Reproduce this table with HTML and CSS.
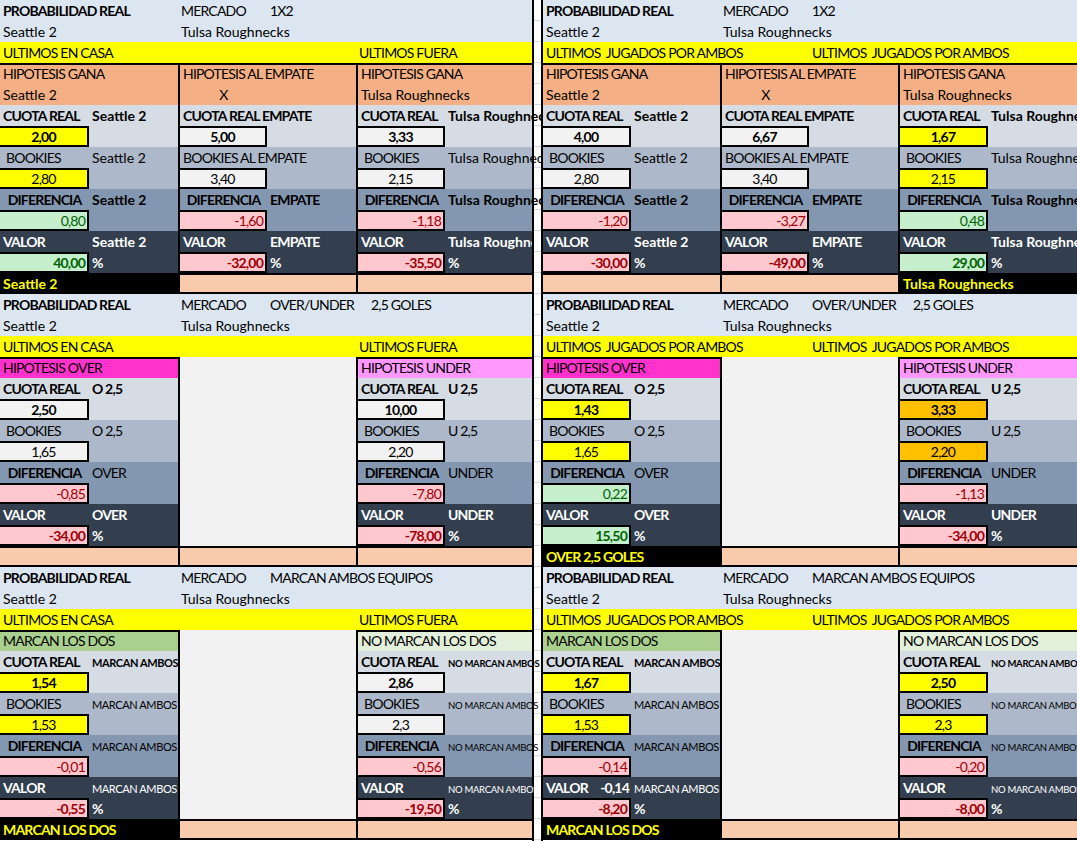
FILE: index.html
```html
<!DOCTYPE html>
<html lang="es">
<head>
<meta charset="utf-8">
<title>Probabilidad real</title>
<link rel="stylesheet" href="styles.css">
</head>
<body>
<div class="sheet">

<!-- ================= LEFT PANEL ================= -->
<div class="panel pl">

<section class="sec">
  <div class="hrow blue"><div class="c s2 b">PROBABILIDAD REAL</div><div class="c">MERCADO</div><div class="c s3">1X2</div></div>
  <div class="hrow blue"><div class="c s2 n">Seattle 2</div><div class="c s4 n">Tulsa Roughnecks</div></div>
  <div class="hrow yel"><div class="c s4">ULTIMOS EN CASA</div><div class="c s2">ULTIMOS FUERA</div></div>
  <div class="groups">
    <div class="grp">
      <div class="c s2 hy t">HIPOTESIS GANA</div>
      <div class="c s2 hy n">Seattle 2</div>
      <div class="c cu b">CUOTA REAL</div><div class="c cu b n">Seattle 2</div>
      <div class="box yl b ctr">2,00</div><div class="c cu"></div>
      <div class="c bk ind">BOOKIES</div><div class="c bk n">Seattle 2</div>
      <div class="box yl ctr">2,80</div><div class="c bk"></div>
      <div class="c df b ctr">DIFERENCIA</div><div class="c df b n">Seattle 2</div>
      <div class="box gr rt">0,80</div><div class="c df"></div>
      <div class="c va b">VALOR</div><div class="c va b n">Seattle 2</div>
      <div class="box gr rt b">40,00</div><div class="c va b">%</div>
      <div class="res s2 win n">Seattle 2</div>
    </div>
    <div class="grp">
      <div class="c s2 hy t">HIPOTESIS AL EMPATE</div>
      <div class="c hy ctr">X</div><div class="c hy"></div>
      <div class="c s2 cu b">CUOTA REAL EMPATE</div>
      <div class="box wh b ctr">5,00</div><div class="c cu"></div>
      <div class="c s2 bk">BOOKIES AL EMPATE</div>
      <div class="box wh ctr">3,40</div><div class="c bk"></div>
      <div class="c df b ctr">DIFERENCIA</div><div class="c df b">EMPATE</div>
      <div class="box rd rt">-1,60</div><div class="c df"></div>
      <div class="c va b">VALOR</div><div class="c va b">EMPATE</div>
      <div class="box rd rt b">-32,00</div><div class="c va b">%</div>
      <div class="res s2 pe"></div>
    </div>
    <div class="grp">
      <div class="c s2 hy t">HIPOTESIS GANA</div>
      <div class="c s2 hy n">Tulsa Roughnecks</div>
      <div class="c cu b">CUOTA REAL</div><div class="c cu b n ovf"><span class="clip">Tulsa Roughnecks</span></div>
      <div class="box wh b ctr">3,33</div><div class="c cu"></div>
      <div class="c bk ind">BOOKIES</div><div class="c bk n ovf"><span class="clip">Tulsa Roughnecks</span></div>
      <div class="box wh ctr">2,15</div><div class="c bk"></div>
      <div class="c df b ctr">DIFERENCIA</div><div class="c df b n ovf"><span class="clip">Tulsa Roughnecks</span></div>
      <div class="box rd rt">-1,18</div><div class="c df"></div>
      <div class="c va b">VALOR</div><div class="c va b n">Tulsa Roughnecks</div>
      <div class="box rd rt b">-35,50</div><div class="c va b">%</div>
      <div class="res s2 pe"></div>
    </div>
  </div>
</section>

<section class="sec">
  <div class="hrow blue"><div class="c s2 b">PROBABILIDAD REAL</div><div class="c">MERCADO</div><div class="c">OVER/UNDER</div><div class="c s2 pg">2,5 GOLES</div></div>
  <div class="hrow blue"><div class="c s2 n">Seattle 2</div><div class="c s4 n">Tulsa Roughnecks</div></div>
  <div class="hrow yel"><div class="c s4">ULTIMOS EN CASA</div><div class="c s2">ULTIMOS FUERA</div></div>
  <div class="groups">
    <div class="grp">
      <div class="c s2 ov t">HIPOTESIS OVER</div>
      <div class="c cu b">CUOTA REAL</div><div class="c cu b">O 2,5</div>
      <div class="box wh b ctr">2,50</div><div class="c cu"></div>
      <div class="c bk ind">BOOKIES</div><div class="c bk">O 2,5</div>
      <div class="box wh ctr">1,65</div><div class="c bk"></div>
      <div class="c df b ctr">DIFERENCIA</div><div class="c df">OVER</div>
      <div class="box rd rt">-0,85</div><div class="c df"></div>
      <div class="c va b">VALOR</div><div class="c va b">OVER</div>
      <div class="box rd rt b">-34,00</div><div class="c va b">%</div>
      <div class="res s2 pe"></div>
    </div>
    <div class="grp">
      <div class="mid"></div>
      <div class="res s2 pe"></div>
    </div>
    <div class="grp">
      <div class="c s2 un t">HIPOTESIS UNDER</div>
      <div class="c cu b">CUOTA REAL</div><div class="c cu b">U 2,5</div>
      <div class="box wh b ctr">10,00</div><div class="c cu"></div>
      <div class="c bk ind">BOOKIES</div><div class="c bk">U 2,5</div>
      <div class="box wh ctr">2,20</div><div class="c bk"></div>
      <div class="c df b ctr">DIFERENCIA</div><div class="c df">UNDER</div>
      <div class="box rd rt">-7,80</div><div class="c df"></div>
      <div class="c va b">VALOR</div><div class="c va b">UNDER</div>
      <div class="box rd rt b">-78,00</div><div class="c va b">%</div>
      <div class="res s2 pe"></div>
    </div>
  </div>
</section>

<section class="sec">
  <div class="hrow blue"><div class="c s2 b">PROBABILIDAD REAL</div><div class="c">MERCADO</div><div class="c s3">MARCAN AMBOS EQUIPOS</div></div>
  <div class="hrow blue"><div class="c s2 n">Seattle 2</div><div class="c s4 n">Tulsa Roughnecks</div></div>
  <div class="hrow yel"><div class="c s4">ULTIMOS EN CASA</div><div class="c s2">ULTIMOS FUERA</div></div>
  <div class="groups">
    <div class="grp">
      <div class="c s2 mg t">MARCAN LOS DOS</div>
      <div class="c cu b">CUOTA REAL</div><div class="c cu b sm">MARCAN AMBOS</div>
      <div class="box yl b ctr">1,54</div><div class="c cu"></div>
      <div class="c bk ind">BOOKIES</div><div class="c bk sm">MARCAN AMBOS</div>
      <div class="box yl ctr">1,53</div><div class="c bk"></div>
      <div class="c df b ctr">DIFERENCIA</div><div class="c df sm">MARCAN AMBOS</div>
      <div class="box rd rt">-0,01</div><div class="c df"></div>
      <div class="c va b">VALOR</div><div class="c va sm">MARCAN AMBOS</div>
      <div class="box rd rt b">-0,55</div><div class="c va b">%</div>
      <div class="res s2 win">MARCAN LOS DOS</div>
    </div>
    <div class="grp">
      <div class="mid"></div>
      <div class="res s2 pe"></div>
    </div>
    <div class="grp">
      <div class="c s2 nm t">NO MARCAN LOS DOS</div>
      <div class="c cu b">CUOTA REAL</div><div class="c cu b xs ovf"><span class="clip">NO MARCAN AMBOS</span></div>
      <div class="box wh b ctr">2,86</div><div class="c cu"></div>
      <div class="c bk ind">BOOKIES</div><div class="c bk xs ovf"><span class="clip">NO MARCAN AMBOS</span></div>
      <div class="box wh ctr">2,3</div><div class="c bk"></div>
      <div class="c df b ctr">DIFERENCIA</div><div class="c df xs ovf"><span class="clip">NO MARCAN AMBOS</span></div>
      <div class="box rd rt">-0,56</div><div class="c df"></div>
      <div class="c va b">VALOR</div><div class="c va xs ovf"><span class="clip">NO MARCAN AMBOS</span></div>
      <div class="box rd rt b">-19,50</div><div class="c va b">%</div>
      <div class="res s2 pe"></div>
    </div>
  </div>
</section>

</div>

<div class="gap"></div>

<!-- ================= RIGHT PANEL ================= -->
<div class="panel pr">

<section class="sec">
  <div class="hrow blue"><div class="c s2 b">PROBABILIDAD REAL</div><div class="c">MERCADO</div><div class="c s3">1X2</div></div>
  <div class="hrow blue"><div class="c s2 n">Seattle 2</div><div class="c s4 n">Tulsa Roughnecks</div></div>
  <div class="hrow yel"><div class="c s3">ULTIMOS&nbsp; JUGADOS POR AMBOS</div><div class="c s3">ULTIMOS&nbsp; JUGADOS POR AMBOS</div></div>
  <div class="groups">
    <div class="grp">
      <div class="c s2 hy t">HIPOTESIS GANA</div>
      <div class="c s2 hy n">Seattle 2</div>
      <div class="c cu b">CUOTA REAL</div><div class="c cu b n">Seattle 2</div>
      <div class="box wh b ctr">4,00</div><div class="c cu"></div>
      <div class="c bk ind">BOOKIES</div><div class="c bk n">Seattle 2</div>
      <div class="box wh ctr">2,80</div><div class="c bk"></div>
      <div class="c df b ctr">DIFERENCIA</div><div class="c df b n">Seattle 2</div>
      <div class="box rd rt">-1,20</div><div class="c df"></div>
      <div class="c va b">VALOR</div><div class="c va b n">Seattle 2</div>
      <div class="box rd rt b">-30,00</div><div class="c va b">%</div>
      <div class="res s2 pe"></div>
    </div>
    <div class="grp">
      <div class="c s2 hy t">HIPOTESIS AL EMPATE</div>
      <div class="c hy ctr">X</div><div class="c hy"></div>
      <div class="c s2 cu b">CUOTA REAL EMPATE</div>
      <div class="box wh b ctr">6,67</div><div class="c cu"></div>
      <div class="c s2 bk">BOOKIES AL EMPATE</div>
      <div class="box wh ctr">3,40</div><div class="c bk"></div>
      <div class="c df b ctr">DIFERENCIA</div><div class="c df b">EMPATE</div>
      <div class="box rd rt">-3,27</div><div class="c df"></div>
      <div class="c va b">VALOR</div><div class="c va b">EMPATE</div>
      <div class="box rd rt b">-49,00</div><div class="c va b">%</div>
      <div class="res s2 pe"></div>
    </div>
    <div class="grp">
      <div class="c s2 hy t">HIPOTESIS GANA</div>
      <div class="c s2 hy n">Tulsa Roughnecks</div>
      <div class="c cu b">CUOTA REAL</div><div class="c cu b n">Tulsa Roughnecks</div>
      <div class="box yl b ctr">1,67</div><div class="c cu"></div>
      <div class="c bk ind">BOOKIES</div><div class="c bk n">Tulsa Roughnecks</div>
      <div class="box yl ctr">2,15</div><div class="c bk"></div>
      <div class="c df b ctr">DIFERENCIA</div><div class="c df b n">Tulsa Roughnecks</div>
      <div class="box gr rt">0,48</div><div class="c df"></div>
      <div class="c va b">VALOR</div><div class="c va b n">Tulsa Roughnecks</div>
      <div class="box gr rt b">29,00</div><div class="c va b">%</div>
      <div class="res s2 win n">Tulsa Roughnecks</div>
    </div>
  </div>
</section>

<section class="sec">
  <div class="hrow blue"><div class="c s2 b">PROBABILIDAD REAL</div><div class="c">MERCADO</div><div class="c">OVER/UNDER</div><div class="c s2 pg">2,5 GOLES</div></div>
  <div class="hrow blue"><div class="c s2 n">Seattle 2</div><div class="c s4 n">Tulsa Roughnecks</div></div>
  <div class="hrow yel"><div class="c s3">ULTIMOS&nbsp; JUGADOS POR AMBOS</div><div class="c s3">ULTIMOS&nbsp; JUGADOS POR AMBOS</div></div>
  <div class="groups">
    <div class="grp">
      <div class="c s2 ov t">HIPOTESIS OVER</div>
      <div class="c cu b">CUOTA REAL</div><div class="c cu b">O 2,5</div>
      <div class="box yl b ctr">1,43</div><div class="c cu"></div>
      <div class="c bk ind">BOOKIES</div><div class="c bk">O 2,5</div>
      <div class="box yl ctr">1,65</div><div class="c bk"></div>
      <div class="c df b ctr">DIFERENCIA</div><div class="c df">OVER</div>
      <div class="box gr rt">0,22</div><div class="c df"></div>
      <div class="c va b">VALOR</div><div class="c va b">OVER</div>
      <div class="box gr rt b">15,50</div><div class="c va b">%</div>
      <div class="res s2 win">OVER 2,5 GOLES</div>
    </div>
    <div class="grp">
      <div class="mid"></div>
      <div class="res s2 pe"></div>
    </div>
    <div class="grp">
      <div class="c s2 un t">HIPOTESIS UNDER</div>
      <div class="c cu b">CUOTA REAL</div><div class="c cu b">U 2,5</div>
      <div class="box or b ctr">3,33</div><div class="c cu"></div>
      <div class="c bk ind">BOOKIES</div><div class="c bk">U 2,5</div>
      <div class="box or ctr">2,20</div><div class="c bk"></div>
      <div class="c df b ctr">DIFERENCIA</div><div class="c df">UNDER</div>
      <div class="box rd rt">-1,13</div><div class="c df"></div>
      <div class="c va b">VALOR</div><div class="c va b">UNDER</div>
      <div class="box rd rt b">-34,00</div><div class="c va b">%</div>
      <div class="res s2 pe"></div>
    </div>
  </div>
</section>

<section class="sec">
  <div class="hrow blue"><div class="c s2 b">PROBABILIDAD REAL</div><div class="c">MERCADO</div><div class="c s3">MARCAN AMBOS EQUIPOS</div></div>
  <div class="hrow blue"><div class="c s2 n">Seattle 2</div><div class="c s4 n">Tulsa Roughnecks</div></div>
  <div class="hrow yel"><div class="c s3">ULTIMOS&nbsp; JUGADOS POR AMBOS</div><div class="c s3">ULTIMOS&nbsp; JUGADOS POR AMBOS</div></div>
  <div class="groups">
    <div class="grp">
      <div class="c s2 mg t">MARCAN LOS DOS</div>
      <div class="c cu b">CUOTA REAL</div><div class="c cu b sm">MARCAN AMBOS</div>
      <div class="box yl b ctr">1,67</div><div class="c cu"></div>
      <div class="c bk ind">BOOKIES</div><div class="c bk sm">MARCAN AMBOS</div>
      <div class="box yl ctr">1,53</div><div class="c bk"></div>
      <div class="c df b ctr">DIFERENCIA</div><div class="c df sm">MARCAN AMBOS</div>
      <div class="box rd rt">-0,14</div><div class="c df"></div>
      <div class="c va b split"><span>VALOR</span><span>-0,14</span></div><div class="c va sm">MARCAN AMBOS</div>
      <div class="box rd rt b">-8,20</div><div class="c va b">%</div>
      <div class="res s2 win">MARCAN LOS DOS</div>
    </div>
    <div class="grp">
      <div class="mid"></div>
      <div class="res s2 pe"></div>
    </div>
    <div class="grp">
      <div class="c s2 nm t">NO MARCAN LOS DOS</div>
      <div class="c cu b">CUOTA REAL</div><div class="c cu b xs">NO MARCAN AMBOS</div>
      <div class="box yl b ctr">2,50</div><div class="c cu"></div>
      <div class="c bk ind">BOOKIES</div><div class="c bk xs">NO MARCAN AMBOS</div>
      <div class="box yl ctr">2,3</div><div class="c bk"></div>
      <div class="c df b ctr">DIFERENCIA</div><div class="c df xs">NO MARCAN AMBOS</div>
      <div class="box rd rt">-0,20</div><div class="c df"></div>
      <div class="c va b">VALOR</div><div class="c va xs">NO MARCAN AMBOS</div>
      <div class="box rd rt b">-8,00</div><div class="c va b">%</div>
      <div class="res s2 pe"></div>
    </div>
  </div>
</section>

</div>
</div>
</body>
</html>
```

FILE: styles.css
```css
* { box-sizing: border-box; margin: 0; padding: 0; }

html, body {
  width: 1077px;
  height: 841px;
  overflow: hidden;
  background: #ffffff;
}

body {
  font-family: Lato, "Liberation Sans", sans-serif;
  font-size: 14px;
  letter-spacing: -0.8px;
  color: #000000;
}

.sheet {
  display: flex;
  width: 1077px;
  height: 841px;
}

.panel { display: flex; flex-direction: column; flex: none; }
.pl { width: 534px; border-right: 2px solid #000; }
.pr { width: 536px; border-left: 2px solid #000; }

.gap {
  flex: none;
  width: 7px;
  background: repeating-linear-gradient(to bottom, #ffffff 0 20px, #d9d9d9 20px 21px);
}

/* header rows */
.hrow { display: grid; height: 21px; }
.pl .hrow { grid-template-columns: repeat(5, 89px) 1fr; }
.pr .hrow { grid-template-columns: 88px 89px 89px 89px 90px 1fr; }
.blue { background: #dce6f1; }
.yel { background: #ffff00; }

/* groups */
.groups { display: grid; }
.pl .groups { grid-template-columns: 178px 178px 1fr; }
.pr .groups { grid-template-columns: 177px 178px 1fr; }

.grp {
  display: grid;
  grid-template-columns: 87px 1fr;
  grid-auto-rows: 21px;
  border-left: 2px solid #000;
  min-width: 0;
}
.pl .grp:first-child { border-left: 0; grid-template-columns: 89px 1fr; }
.pr .grp:first-child { border-left: 0; grid-template-columns: 88px 1fr; }
.pr .grp:last-child { grid-template-columns: 88px 1fr; }

/* cells */
.c {
  padding: 0 3px;
  line-height: 22px;
  white-space: nowrap;
  overflow: hidden;
  min-width: 0;
}
.s2 { grid-column: span 2; }
.s3 { grid-column: span 3; }
.s4 { grid-column: span 4; }
.b { font-weight: 700; }
.n { letter-spacing: 0; }
.ctr { text-align: center; }
.rt { text-align: right; }
.ind { padding-left: 6px; }
.pg { padding-left: 15px; }
.t { border-top: 2px solid #000; line-height: 18px; }

.sm { font-size: 11px; letter-spacing: -0.4px; line-height: 24px; }
.xs { font-size: 9.5px; letter-spacing: -0.3px; line-height: 25px; }

/* text spilling over the empty column between both sheets */
.ovf { overflow: visible; position: relative; z-index: 1; }
.clip { display: block; width: 93px; overflow: hidden; }

.split { display: flex; justify-content: space-between; padding-right: 2px; }

/* row fills */
.hy { background: #f4b084; }
.ov { background: #ff33cc; }
.un { background: #ff99ff; }
.mg { background: #a9d08e; }
.nm { background: #e2efda; }
.cu { background: #d6dce4; }
.bk { background: #adb9ca; }
.df { background: #8497b0; }
.va { background: #333f4f; color: #ffffff; }
.mid { grid-column: span 2; grid-row: span 9; background: #f2f2f2; }

/* value boxes */
.box {
  border: 2px solid #000;
  border-left: 0;
  padding: 0 2px;
  line-height: 17px;
  white-space: nowrap;
  overflow: hidden;
}
.wh { background: #f2f2f2; }
.yl { background: #ffff00; }
.or { background: #ffc000; }
.gr { background: #c6efce; color: #006100; }
.rd { background: #ffc7ce; color: #9c0006; }

/* result row */
.res {
  border-top: 2px solid #000;
  border-bottom: 2px solid #000;
  padding: 0 3px;
  line-height: 17px;
  white-space: nowrap;
  overflow: hidden;
}
.pe { background: #f8cbad; }
.win { background: #000000; color: #ffff00; font-weight: 700; }
```
